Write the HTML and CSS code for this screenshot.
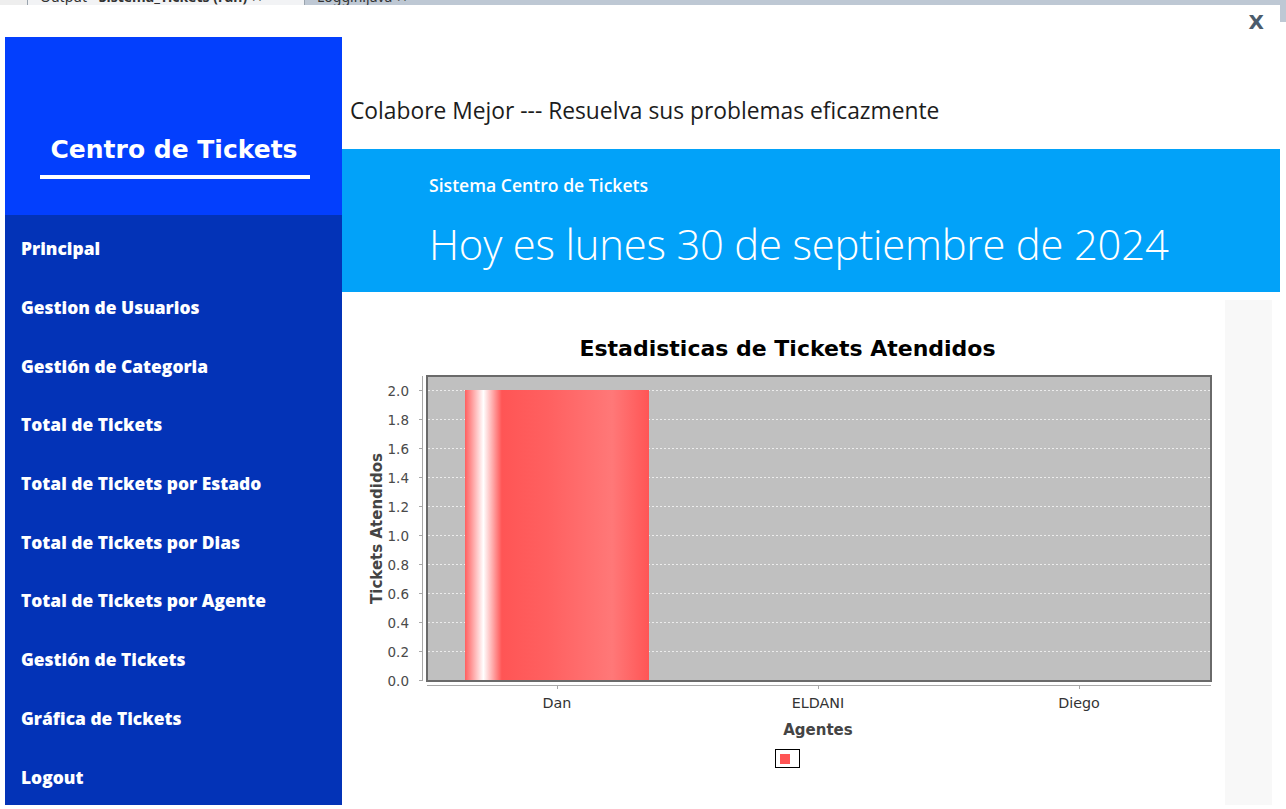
FILE: index.html
```html
<!DOCTYPE html>
<html lang="es">
<head>
<meta charset="utf-8">
<title>Centro de Tickets</title>
<link rel="stylesheet" href="styles.css">
</head>
<body>
<div class="ide-strip">
  <div class="ide-gutter"></div>
  <div class="ide-tab ide-tab-active"><span class="ide-tab-label">Output - <b>Sistema_Tickets (run)</b> &#x2715;</span></div>
  <div class="ide-tab"><span class="ide-tab-label">Loggin.java &#x2715;</span></div>
</div>
<div class="stage">
  <div class="ide-left"></div>
  <div class="window">
    <aside class="sidebar">
      <div class="sidebar-top"></div>
      <div class="brand">
        <div class="brand-title">Centro de Tickets</div>
        <div class="brand-rule"></div>
      </div>
      <nav class="menu">
        <a class="menu-item">Principal</a>
        <a class="menu-item">Gestion de Usuarios</a>
        <a class="menu-item">Gestión de Categoria</a>
        <a class="menu-item">Total de Tickets</a>
        <a class="menu-item">Total de Tickets por Estado</a>
        <a class="menu-item">Total de Tickets por Dias</a>
        <a class="menu-item">Total de Tickets por Agente</a>
        <a class="menu-item">Gestión de Tickets</a>
        <a class="menu-item">Gráfica de Tickets</a>
        <a class="menu-item">Logout</a>
      </nav>
    </aside>
    <main class="main">
      <header class="head">
        <div class="close-row"><span class="close">X</span></div>
        <div class="slogan">Colabore Mejor --- Resuelva sus problemas eficazmente</div>
      </header>
      <section class="banner">
        <div class="banner-sub">Sistema Centro de Tickets</div>
        <div class="banner-date">Hoy es lunes 30 de septiembre de 2024</div>
      </section>
      <section class="content">
        <div class="chart">
          <div class="chart-title">Estadisticas de Tickets Atendidos</div>
          <svg class="plot" width="875" height="380" viewBox="0 0 875 380">
            <defs>
              <linearGradient id="barGrad" x1="0" y1="0" x2="1" y2="0">
                <stop offset="0" stop-color="#ff5f5f"/>
                <stop offset="0.1" stop-color="#ffffff"/>
                <stop offset="0.2" stop-color="#ff5555"/>
                <stop offset="0.45" stop-color="#ff6060"/>
                <stop offset="0.8" stop-color="#ff7878"/>
                <stop offset="1" stop-color="#ff5555"/>
              </linearGradient>
            </defs>
            <rect x="77" y="10" width="784" height="305" fill="#c0c0c0"/>
            <g class="grid">
              <line x1="78" y1="24.5" x2="860" y2="24.5"/>
              <line x1="78" y1="53.5" x2="860" y2="53.5"/>
              <line x1="78" y1="82.5" x2="860" y2="82.5"/>
              <line x1="78" y1="111.5" x2="860" y2="111.5"/>
              <line x1="78" y1="140.5" x2="860" y2="140.5"/>
              <line x1="78" y1="169.5" x2="860" y2="169.5"/>
              <line x1="78" y1="198.5" x2="860" y2="198.5"/>
              <line x1="78" y1="227.5" x2="860" y2="227.5"/>
              <line x1="78" y1="256.5" x2="860" y2="256.5"/>
              <line x1="78" y1="285.5" x2="860" y2="285.5"/>
            </g>
            <rect x="115" y="24" width="184" height="291" fill="url(#barGrad)"/>
            <rect class="frame" x="77" y="10" width="784" height="305"/>
            <g class="axis">
              <line x1="72.5" y1="10" x2="72.5" y2="315"/>
              <line x1="69" y1="24.5" x2="72.5" y2="24.5"/>
              <line x1="69" y1="53.5" x2="72.5" y2="53.5"/>
              <line x1="69" y1="82.5" x2="72.5" y2="82.5"/>
              <line x1="69" y1="111.5" x2="72.5" y2="111.5"/>
              <line x1="69" y1="140.5" x2="72.5" y2="140.5"/>
              <line x1="69" y1="169.5" x2="72.5" y2="169.5"/>
              <line x1="69" y1="198.5" x2="72.5" y2="198.5"/>
              <line x1="69" y1="227.5" x2="72.5" y2="227.5"/>
              <line x1="69" y1="256.5" x2="72.5" y2="256.5"/>
              <line x1="69" y1="285.5" x2="72.5" y2="285.5"/>
              <line x1="69" y1="314.5" x2="72.5" y2="314.5"/>
              <line x1="77" y1="319.5" x2="861" y2="319.5"/>
              <line x1="207.5" y1="319.5" x2="207.5" y2="323"/>
              <line x1="468.5" y1="319.5" x2="468.5" y2="323"/>
              <line x1="729.5" y1="319.5" x2="729.5" y2="323"/>
            </g>
            <g class="ticks">
              <text x="59" y="29.5">2.0</text>
              <text x="59" y="58.5">1.8</text>
              <text x="59" y="87.5">1.6</text>
              <text x="59" y="116.5">1.4</text>
              <text x="59" y="145.5">1.2</text>
              <text x="59" y="174.5">1.0</text>
              <text x="59" y="203.5">0.8</text>
              <text x="59" y="232.5">0.6</text>
              <text x="59" y="261.5">0.4</text>
              <text x="59" y="290.5">0.2</text>
              <text x="59" y="319.5">0.0</text>
            </g>
            <g class="cats">
              <text x="207" y="341.5">Dan</text>
              <text x="468" y="341.5">ELDANI</text>
              <text x="729" y="341.5">Diego</text>
            </g>
            <text class="axis-label" x="468" y="369">Agentes</text>
            <text class="axis-label" transform="translate(31.5 162.5) rotate(-90)">Tickets Atendidos</text>
          </svg>
          <div class="legend"><span class="legend-box"><span class="legend-swatch"></span></span></div>
        </div>
        <div class="side-panel"></div>
      </section>
    </main>
  </div>
  <div class="ide-right"></div>
</div>
</body>
</html>
```

FILE: styles.css
```css
* { box-sizing: border-box; }

html, body {
  margin: 0;
  padding: 0;
}

body {
  width: 1286px;
  height: 809px;
  overflow: hidden;
  background: #ffffff;
  font-family: "Open Sans", "Noto Sans", sans-serif;
}

/* IDE remnants behind the window */
.ide-strip {
  display: flex;
  height: 5px;
  overflow: hidden;
  background: #bec8d4;
}
.ide-gutter {
  width: 28px;
  background: #eeeeee;
  border-right: 1px solid #9aa4ae;
}
.ide-tab {
  display: flex;
  align-items: flex-end;
  padding: 0 12px;
  font-family: "Noto Sans", sans-serif;
  font-size: 14px;
  color: #333;
}
.ide-tab-active {
  width: 277px;
  background: #f2f3f5;
  border-right: 1px solid #9aa4ae;
}
.ide-tab-label {
  display: block;
  line-height: 19px;
  margin-bottom: -1px;
  white-space: nowrap;
}

.stage {
  display: flex;
  height: 804px;
}
.ide-left {
  width: 5px;
}
.ide-right {
  width: 6px;
}
.ide-right::before {
  content: "";
  display: block;
  height: 17px;
  background: #bec8d4;
}

.window {
  display: flex;
  width: 1275px;
  height: 800px;
  background: #ffffff;
}

/* Sidebar */
.sidebar {
  width: 337px;
  display: flex;
  flex-direction: column;
}
.sidebar-top {
  height: 32px;
  background: #ffffff;
}
.brand {
  height: 178px;
  background: #033ffd;
  display: flex;
  flex-direction: column;
  align-items: center;
}
.brand-title {
  margin-top: 98px;
  font-family: "DejaVu Sans", sans-serif;
  font-weight: 700;
  font-size: 25px;
  line-height: 29px;
  color: #ffffff;
  padding-left: 1px;
}
.brand-rule {
  margin-top: 11px;
  margin-left: 3px;
  width: 270px;
  height: 4px;
  background: #ffffff;
}
.menu {
  height: 590px;
  background: #0333b7;
  padding-top: 4px;
  display: flex;
  flex-direction: column;
}
.menu-item {
  height: 58.7px;
  flex: none;
  display: flex;
  align-items: center;
  padding-left: 16px;
  font-family: "Open Sans", sans-serif;
  font-weight: 800;
  font-size: 17.4px;
  line-height: 20px;
  color: #ffffff;
  text-decoration: none;
}

/* Main */
.main {
  flex: 1;
  display: flex;
  flex-direction: column;
}
.head {
  height: 144px;
  padding-top: 7px;
}
.close-row {
  display: flex;
  justify-content: flex-end;
  padding-right: 16px;
  height: 20px;
}
.close {
  font-family: "DejaVu Sans", sans-serif;
  font-weight: 700;
  font-size: 20px;
  line-height: 20px;
  color: #4b5c6c;
}
.slogan {
  margin-top: 64px;
  padding-left: 8px;
  font-family: "Open Sans", sans-serif;
  font-size: 22.8px;
  line-height: 30px;
  color: #1c1c1c;
}

.banner {
  height: 143px;
  background: #02a2f9;
  padding: 24px 0 0 87px;
  color: #ffffff;
}
.banner-sub {
  font-family: "Open Sans", sans-serif;
  font-weight: 600;
  font-size: 17.6px;
  line-height: 24px;
}
.banner-date {
  margin-top: 22px;
  font-family: "Open Sans", sans-serif;
  font-weight: 300;
  font-size: 41.8px;
  line-height: 50px;
  letter-spacing: -0.2px;
}

.content {
  flex: 1;
  display: flex;
}
.chart {
  width: 875px;
  margin-left: 8px;
  padding-top: 42px;
  display: flex;
  flex-direction: column;
}
.chart-title {
  text-align: center;
  font-family: "DejaVu Sans", sans-serif;
  font-weight: 700;
  font-size: 22px;
  line-height: 30px;
  color: #000000;
}
.plot {
  display: block;
  margin-top: 2px;
}
.plot .grid line {
  stroke: #ececec;
  stroke-width: 1;
  stroke-dasharray: 2 2;
}
.plot .frame {
  fill: none;
  stroke: #6a6a6a;
  stroke-width: 2;
}
.plot .axis line {
  stroke: #a8a8a8;
  stroke-width: 1;
}
.plot .ticks text {
  font-family: "DejaVu Sans", sans-serif;
  font-size: 13.5px;
  fill: #4a4a4a;
  text-anchor: end;
}
.plot .cats text {
  font-family: "DejaVu Sans", sans-serif;
  font-size: 14.3px;
  fill: #333333;
  text-anchor: middle;
}
.plot .axis-label {
  font-family: "DejaVu Sans", sans-serif;
  font-weight: 700;
  font-size: 15px;
  fill: #444444;
  text-anchor: middle;
}
.legend {
  margin-top: 3px;
  display: flex;
  justify-content: center;
}
.legend-box {
  width: 25px;
  height: 19px;
  border: 1px solid #000000;
  padding: 4px 0 0 4px;
}
.legend-swatch {
  display: block;
  width: 10px;
  height: 10px;
  background: #ff5555;
}
.side-panel {
  width: 47px;
  margin-top: 8px;
  background: #f8f8f8;
}
```
